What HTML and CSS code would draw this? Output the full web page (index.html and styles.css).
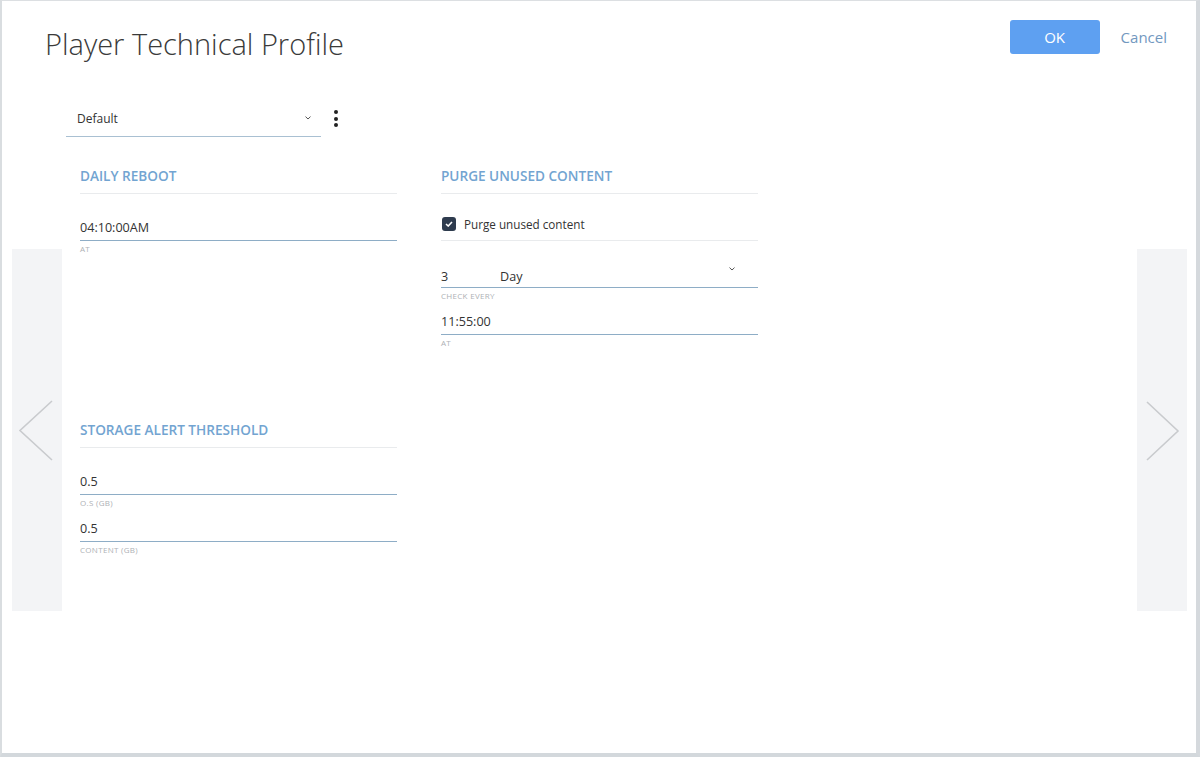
FILE: index.html
```html
<!DOCTYPE html>
<html lang="en">
<head>
<meta charset="utf-8">
<title>Player Technical Profile</title>
<link rel="stylesheet" href="styles.css">
</head>
<body>
<div class="frame">
  <header class="header">
    <h1 class="title">Player Technical Profile</h1>
    <div class="actions">
      <button class="btn-ok" type="button">OK</button>
      <button class="btn-cancel" type="button">Cancel</button>
    </div>
  </header>
  <div class="main">
    <div class="nav nav-left">
      <svg width="50" height="362" viewBox="0 0 50 362"><polyline points="40,152 8,181.5 40,211" fill="none" stroke="#c9cbce" stroke-width="1.6"/></svg>
    </div>
    <div class="content">
      <div class="profile-row">
        <div class="profile-select">
          <span class="profile-value">Default</span>
          <svg class="chev chev-profile" width="6" height="4" viewBox="0 0 6 4"><polyline points="0.5,0.6 3,3 5.5,0.6" fill="none" stroke="#555" stroke-width="1"/></svg>
        </div>
        <div class="kebab"><span></span><span></span><span></span></div>
      </div>
      <div class="grid">
        <section class="section">
          <h2 class="section-head">DAILY REBOOT</h2>
          <div class="field first">
            <div class="value">04:10:00AM</div>
            <div class="label">AT</div>
          </div>
        </section>
        <section class="section">
          <h2 class="section-head">PURGE UNUSED CONTENT</h2>
          <div class="check-row">
            <span class="checkbox"><svg width="8" height="6" viewBox="0 0 8 6"><polyline points="1,3 3.2,5 7,1" fill="none" stroke="#fff" stroke-width="1.6"/></svg></span>
            <span class="check-label">Purge unused content</span>
          </div>
          <div class="field select-field">
            <div class="value value-select"><span class="num">3</span><span class="unit">Day</span><svg class="chev chev-day" width="6" height="4" viewBox="0 0 6 4"><polyline points="0.5,0.6 3,3 5.5,0.6" fill="none" stroke="#555" stroke-width="1"/></svg></div>
            <div class="label">CHECK EVERY</div>
          </div>
          <div class="field">
            <div class="value">11:55:00</div>
            <div class="label">AT</div>
          </div>
        </section>
        <section class="section">
          <h2 class="section-head">STORAGE ALERT THRESHOLD</h2>
          <div class="field first">
            <div class="value">0.5</div>
            <div class="label">O.S (GB)</div>
          </div>
          <div class="field">
            <div class="value">0.5</div>
            <div class="label">CONTENT (GB)</div>
          </div>
        </section>
      </div>
    </div>
    <div class="nav nav-right">
      <svg width="50" height="362" viewBox="0 0 50 362"><polyline points="10,153 41,182 10,211" fill="none" stroke="#c9cbce" stroke-width="1.6"/></svg>
    </div>
  </div>
</div>
</body>
</html>
```

FILE: styles.css
```css
* { box-sizing: border-box; }
html, body { margin: 0; padding: 0; background: #fff; }
body { font-family: "Open Sans", "Noto Sans", sans-serif; color: #333; }

.frame {
  width: 1200px;
  height: 757px;
  border-top: 1px solid #dcdfe2;
  border-left: 2px solid #d9dde0;
  border-right: 4px solid #d5d9dd;
  border-bottom: 4px solid #d3d8dc;
  display: flex;
  flex-direction: column;
  overflow: hidden;
}

.header {
  height: 99px;
  display: flex;
  justify-content: space-between;
  align-items: flex-start;
  padding: 19px 29px 0 43px;
}
.title {
  margin: 6px 0 0 0;
  font-size: 29px;
  line-height: 35px;
  font-weight: 300;
  color: #3a3a3a;
}
.actions { display: flex; align-items: center; }
.btn-ok {
  width: 90px;
  height: 34px;
  border: none;
  border-radius: 3px;
  background: #5ea0f1;
  color: #fff;
  font-family: inherit;
  font-size: 15px;
  padding: 0;
}
.btn-cancel {
  border: none;
  background: none;
  padding: 0;
  margin-left: 21px;
  font-family: inherit;
  font-size: 15px;
  color: #7298bf;
}

.main { display: flex; align-items: flex-start; flex: 1; }
.nav {
  width: 50px;
  height: 362px;
  margin-top: 149px;
  background: #f3f4f6;
}
.nav svg { display: block; }
.nav-left { margin-left: 10px; }
.nav-right { margin-right: 9px; }

.content {
  flex: 1;
  margin-left: 4px;
}

.profile-row { display: flex; align-items: flex-start; margin-top: 11px; }
.profile-select {
  width: 255px;
  display: flex;
  justify-content: space-between;
  padding: 0 10px 9px 11px;
  border-bottom: 1px solid #a9c0d2;
}
.profile-value { font-size: 12px; line-height: 16px; color: #333; }
.chev { display: block; }
.chev-profile { margin-top: 5px; }
.kebab {
  margin-left: 13px;
  margin-top: -1px;
  display: flex;
  flex-direction: column;
  gap: 2.6px;
}
.kebab span {
  width: 4px;
  height: 4px;
  border-radius: 50%;
  background: #222;
}

.grid {
  display: grid;
  grid-template-columns: 317px 317px;
  column-gap: 44px;
  row-gap: 73px;
  margin: 30px 0 0 14px;
  align-items: start;
}
.section-head {
  margin: 0;
  font-size: 13.6px;
  line-height: 18px;
  font-weight: 600;
  color: #72a4d1;
  padding-bottom: 8px;
  border-bottom: 1px solid #e9ebed;
}

.field { margin-top: 12px; }
.field.first { margin-top: 25px; }
.value {
  font-size: 12.6px;
  line-height: 18px;
  color: #333;
  padding-bottom: 3px;
  border-bottom: 1px solid #8eadc6;
}
.label {
  margin-top: 3px;
  font-size: 8px;
  line-height: 10px;
  letter-spacing: 0.3px;
  color: #aeb1b5;
}

.check-row {
  display: flex;
  align-items: center;
  padding: 23px 0 9px 1px;
  border-bottom: 1px solid #e9ebed;
}
.checkbox {
  width: 14px;
  height: 14px;
  border-radius: 3px;
  background: #2e3b4e;
  display: flex;
  align-items: center;
  justify-content: center;
}
.checkbox svg { display: block; }
.check-label {
  margin-left: 8px;
  font-size: 11.7px;
  line-height: 14px;
  color: #333;
}

.select-field { margin-top: 27px; }
.value-select {
  display: flex;
  align-items: flex-start;
  padding-bottom: 1px;
  padding-right: 23px;
}
.num { width: 59px; }
.unit { flex: 1; }
.chev-day { margin-top: -1px; }
```
